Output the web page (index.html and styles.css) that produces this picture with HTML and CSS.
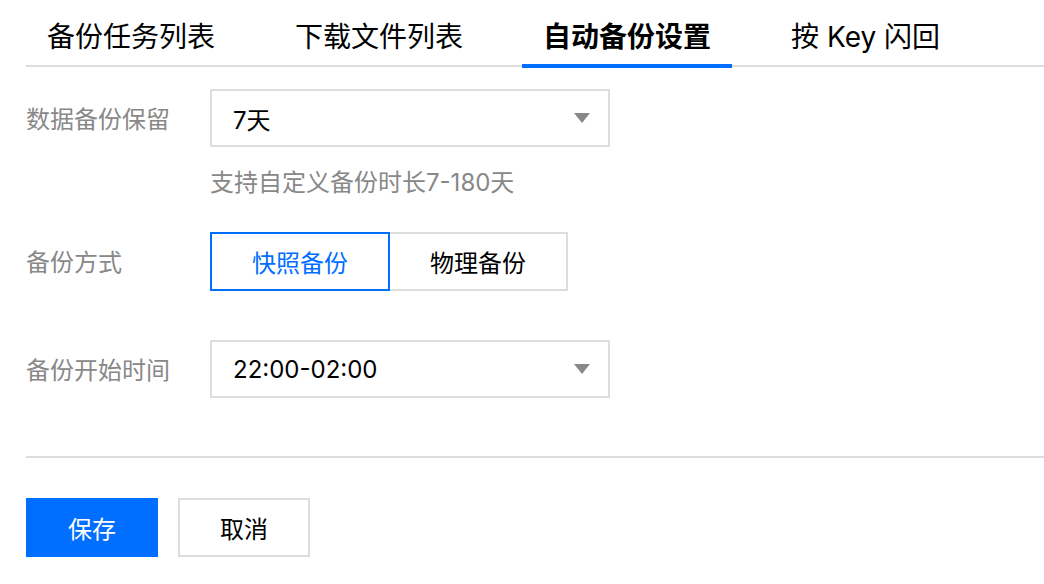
FILE: index.html
```html
<!DOCTYPE html>
<html lang="zh-CN">
<head>
<meta charset="utf-8">
<link rel="stylesheet" href="styles.css">
</head>
<body>
<div class="page">
  <div class="tabs">
    <div class="tab">备份任务列表</div>
    <div class="tab">下载文件列表</div>
    <div class="tab active">自动备份设置</div>
    <div class="tab">按 Key 闪回</div>
  </div>
  <div class="form">
    <div class="row row-1">
      <div class="label">数据备份保留</div>
      <div class="field">
        <div class="select"><span>7天</span><span class="arrow"></span></div>
        <div class="hint">支持自定义备份时长7-180天</div>
      </div>
    </div>
    <div class="row row-2">
      <div class="label">备份方式</div>
      <div class="field">
        <div class="segments">
          <div class="seg active">快照备份</div>
          <div class="seg">物理备份</div>
        </div>
      </div>
    </div>
    <div class="row row-3">
      <div class="label">备份开始时间</div>
      <div class="field">
        <div class="select"><span>22:00-02:00</span><span class="arrow"></span></div>
      </div>
    </div>
  </div>
  <div class="footer">
    <div class="btn primary">保存</div>
    <div class="btn">取消</div>
  </div>
</div>
</body>
</html>
```

FILE: styles.css
```css
* { box-sizing: border-box; }
html, body { margin: 0; padding: 0; background: #fff; }
body {
  font-family: Inter, "Noto Sans CJK SC", sans-serif;
  color: #000;
  width: 1044px;
  height: 584px;
  overflow: hidden;
}
.page { padding-left: 26px; }
.tabs {
  display: flex;
  gap: 38px;
  height: 67px;
  border-bottom: 2px solid #dddddd;
}
.tab {
  position: relative;
  padding: 17px 21px 0;
  font-size: 28px;
  line-height: 40px;
  height: 65px;
  white-space: nowrap;
}
.tab.active { font-weight: 700; }
.tab.active::after {
  content: "";
  position: absolute;
  left: 0;
  right: 0;
  bottom: -3px;
  height: 4px;
  background: #006eff;
}
.form { display: flex; flex-direction: column; }
.row { display: flex; align-items: flex-start; }
.row-1 { margin-top: 22px; }
.row-2 { margin-top: 31px; }
.row-3 { margin-top: 48px; }
.label {
  width: 184px;
  flex: none;
  font-size: 24px;
  line-height: 58px;
  padding-top: 2px;
  color: #888888;
  white-space: nowrap;
}
.field { display: flex; flex-direction: column; }
.select {
  width: 400px;
  height: 58px;
  border: 2px solid #dddddd;
  display: flex;
  align-items: center;
  justify-content: space-between;
  padding: 0 18px 0 21px;
  font-size: 24px;
}
.arrow {
  width: 0;
  height: 0;
  border-left: 8px solid transparent;
  border-right: 8px solid transparent;
  border-top: 10px solid #888888;
}
.hint {
  margin-top: 18px;
  font-size: 24px;
  line-height: 36px;
  color: #888888;
}
.segments { display: flex; }
.seg {
  width: 180px;
  height: 59px;
  border: 2px solid #dddddd;
  display: flex;
  align-items: center;
  justify-content: center;
  font-size: 24px;
}
.seg + .seg { margin-left: -2px; }
.seg.active {
  border-color: #006eff;
  color: #006eff;
  position: relative;
  z-index: 1;
}
.footer {
  margin-top: 56px;
  border-top: 2px solid #dddddd;
  padding-top: 40px;
  display: flex;
  gap: 20px;
}
.btn {
  width: 132px;
  height: 59px;
  border: 2px solid #dddddd;
  display: flex;
  align-items: center;
  justify-content: center;
  font-size: 24px;
}
.btn.primary {
  background: #006eff;
  border-color: #006eff;
  color: #fff;
}
```
